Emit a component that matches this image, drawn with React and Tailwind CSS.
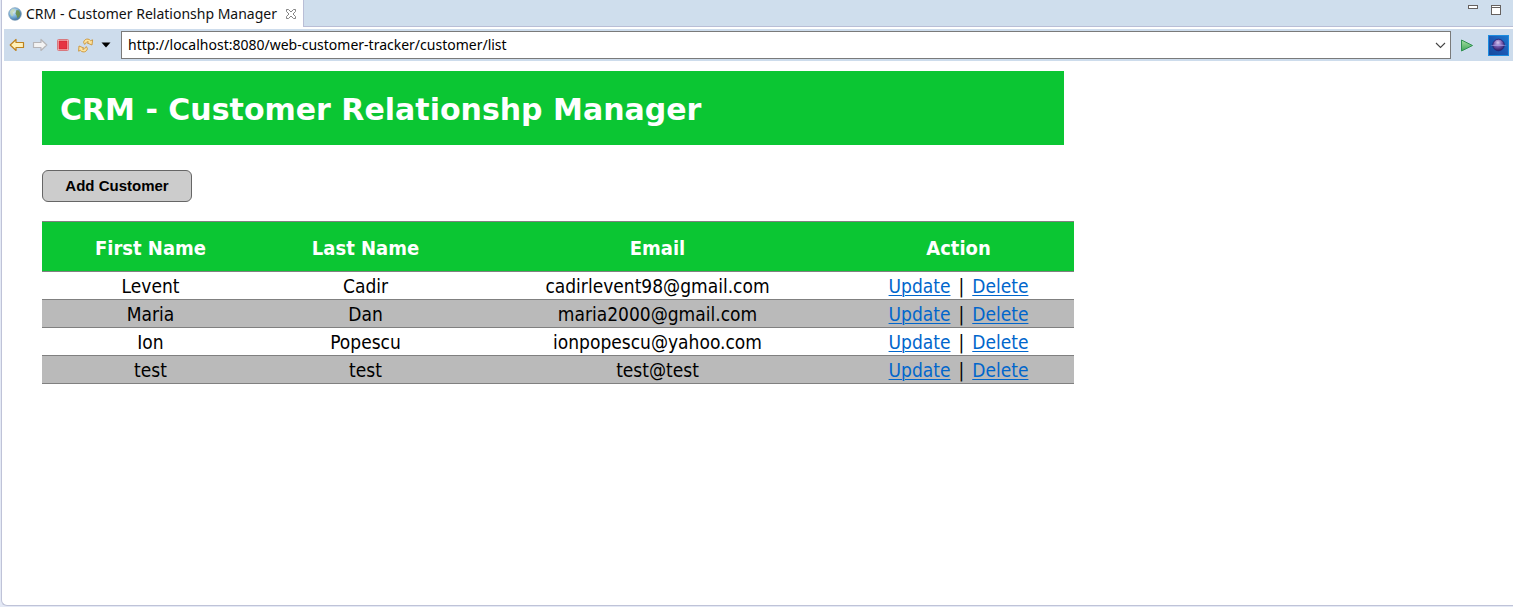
const customers = [
  { first: 'Levent', last: 'Cadir', email: 'cadirlevent98@gmail.com' },
  { first: 'Maria', last: 'Dan', email: 'maria2000@gmail.com' },
  { first: 'Ion', last: 'Popescu', email: 'ionpopescu@yahoo.com' },
  { first: 'test', last: 'test', email: 'test@test' },
];

function GlobeIcon() {
  return (
    <svg width="14" height="14" viewBox="0 0 14 14" aria-hidden="true">
      <defs>
        <radialGradient id="sea" cx="0.35" cy="0.3" r="0.8">
          <stop offset="0" stopColor="#e2f2fa" />
          <stop offset="0.5" stopColor="#7fb4dc" />
          <stop offset="1" stopColor="#2f6298" />
        </radialGradient>
      </defs>
      <circle cx="7" cy="7" r="6.3" fill="url(#sea)" stroke="#6f93b0" strokeWidth="0.7" />
      <path d="M2 4.500L4.500 1.800L7 2.200L6.500 4.200L4.500 6L5.500 8L4 9.500L2.500 7.500Z" fill="#c3d5ac" opacity="0.7" />
      <path d="M8.500 3L11 3.500L12.300 6.500L11.500 9.500L9.500 11.500L8.800 9L7.500 6.500Z" fill="#6c8f48" opacity="0.9" />
    </svg>
  );
}

function TabCloseIcon() {
  return (
    <svg width="12" height="12" viewBox="0 0 12 12" fill="#fff" stroke="#777" strokeWidth="0.9" aria-hidden="true">
      <path d="M1.500 1.500H3.500L6 4L8.500 1.500H10.500V3.500L8 6L10.500 8.500V10.500H8.500L6 8L3.500 10.500H1.500V8.500L4 6L1.500 3.500Z" />
    </svg>
  );
}

function BackIcon() {
  return (
    <svg width="16" height="14" viewBox="0 0 16 14" aria-hidden="true">
      <path d="M1.200 7L7 1.500V4.500H14.500V9.500H7V12.500Z" fill="#fff0b8" stroke="#bd821f" strokeWidth="1.200" strokeLinejoin="round" />
    </svg>
  );
}

function ForwardIcon() {
  return (
    <svg width="16" height="14" viewBox="0 0 16 14" aria-hidden="true">
      <path d="M14.800 7L9 1.500V4.500H1.500V9.500H9V12.500Z" fill="#f3f3f3" stroke="#b5b5b8" strokeWidth="1.200" strokeLinejoin="round" />
    </svg>
  );
}

function StopIcon() {
  return (
    <svg width="12" height="12" viewBox="0 0 12 12" aria-hidden="true">
      <rect x="0.500" y="0.500" width="11" height="11" rx="1" fill="#f9c0c0" stroke="#d8787e" />
      <rect x="2" y="2" width="8" height="8" fill="#e63442" stroke="#c8202e" strokeWidth="0.600" />
    </svg>
  );
}

function RefreshIcon() {
  return (
    <svg width="16" height="16" viewBox="0 0 16 16" fill="#ffe4a0" stroke="#c99336" strokeWidth="0.9" strokeLinejoin="round" aria-hidden="true">
      <path d="M6.500 7.300L5.600 5.200C6 3.200 7.800 1.800 10 2.100C11.200 2.300 12 2.900 12.600 3.700L14.600 2.800L14 8L9.200 6L10.500 5C9.300 4.200 8 5 7.800 6.500Z" />
      <path d="M8.500 9.700L9.400 11.800C9 13.800 7.200 15.200 5 14.900C3.800 14.700 3 14.100 2.400 13.300L0.600 14.200L1 9L5.800 11L4.500 12C5.700 12.800 7 12 7.200 10.500Z" />
    </svg>
  );
}

function GoIcon() {
  return (
    <svg width="14" height="13" viewBox="0 0 14 13" aria-hidden="true">
      <defs>
        <linearGradient id="go" x1="0" y1="0" x2="0" y2="1">
          <stop offset="0" stopColor="#a5dfa0" />
          <stop offset="1" stopColor="#3fa65a" />
        </linearGradient>
      </defs>
      <path d="M1.500 1L12.500 6.500L1.500 12Z" fill="url(#go)" stroke="#2f9150" strokeWidth="1" strokeLinejoin="round" />
    </svg>
  );
}

function PlanetIcon() {
  return (
    <svg width="21" height="21" viewBox="0 0 21 21" aria-hidden="true">
      <defs>
        <linearGradient id="sky" x1="1" y1="0" x2="0" y2="1">
          <stop offset="0" stopColor="#1a7ad0" />
          <stop offset="0.500" stopColor="#1c58b4" />
          <stop offset="1" stopColor="#164a9c" />
        </linearGradient>
        <radialGradient id="planet" cx="0.450" cy="0.300" r="0.700">
          <stop offset="0" stopColor="#d8c8f0" />
          <stop offset="0.500" stopColor="#7658ac" />
          <stop offset="1" stopColor="#2a1a62" />
        </radialGradient>
      </defs>
      <rect x="0.500" y="0.500" width="20" height="20" fill="url(#sky)" stroke="#1c8ce0" />
      <circle cx="10.500" cy="10" r="5.800" fill="url(#planet)" stroke="#2b1f70" strokeWidth="0.800" />
      <path d="M2 10.200Q10.500 8.800 19 10.200Q10.500 11.400 2 10.200Z" fill="#a9a0e6" />
    </svg>
  );
}

function TabBar() {
  return (
    <header className="flex h-[27px] items-stretch justify-between border-b border-[#b9bed6] bg-[#cfdeed]">
      <div className="-mb-px flex items-center gap-1 border-r border-[#b9bed6] bg-white px-1.5">
        <GlobeIcon />
        <span className="text-sm text-[#111]">CRM - Customer Relationshp Manager</span>
        <button type="button" aria-label="Close tab" className="ml-1">
          <TabCloseIcon />
        </button>
      </div>
      <div className="flex items-start gap-[11px] pt-1 pr-[11px]">
        <button type="button" aria-label="Minimize">
          <svg width="12" height="12" viewBox="0 0 12 12" aria-hidden="true">
            <rect x="1.500" y="1.500" width="9" height="3" fill="#fff" stroke="#66615f" />
          </svg>
        </button>
        <button type="button" aria-label="Maximize">
          <svg width="12" height="12" viewBox="0 0 12 12" aria-hidden="true">
            <rect x="1.500" y="1.500" width="9" height="9" fill="#fff" stroke="#66615f" />
            <path d="M1 3.500H11" stroke="#66615f" />
          </svg>
        </button>
      </div>
    </header>
  );
}

function Toolbar() {
  return (
    <div className="mt-0.5 ml-0.5 flex h-8 items-center bg-[#cddcec] pl-[5px]">
      <div className="flex items-center gap-[7px]">
        <button type="button" aria-label="Back"><BackIcon /></button>
        <button type="button" aria-label="Forward"><ForwardIcon /></button>
        <button type="button" aria-label="Stop" className="px-0.5"><StopIcon /></button>
        <button type="button" aria-label="Refresh"><RefreshIcon /></button>
        <button type="button" aria-label="Refresh options">
          <svg width="10" height="6" viewBox="0 0 10 6" aria-hidden="true"><path d="M0.500 0.500H9.500L5 5.500Z" fill="#000" /></svg>
        </button>
      </div>
      <form className="ml-2.5 flex h-7 flex-1 items-center border border-[#7a7a7a] bg-white">
        <input
          type="text"
          aria-label="Address"
          defaultValue="http://localhost:8080/web-customer-tracker/customer/list"
          className="h-full min-w-0 flex-1 bg-transparent pb-0.5 pl-1.5 text-sm text-black outline-none"
        />
        <button type="button" aria-label="Show address history" className="px-1">
          <svg width="11" height="7" viewBox="0 0 11 7" fill="none" stroke="#444" strokeWidth="1.100" aria-hidden="true"><path d="M1 1L5.500 5.500L10 1" /></svg>
        </button>
      </form>
      <button type="button" aria-label="Go" className="ml-[9px]"><GoIcon /></button>
      <button type="button" aria-label="Open in external browser" className="ml-3.5 mr-1"><PlanetIcon /></button>
    </div>
  );
}

function CustomerTable() {
  const link = 'text-[#0066cc] underline decoration-1 underline-offset-2';
  return (
    <table className="mt-[19px] w-full max-w-[1032px] table-fixed border-collapse text-center text-[19px] leading-[25px] text-black">
      <colgroup>
        <col className="w-[217px]" />
        <col className="w-[213px]" />
        <col className="w-[371px]" />
        <col className="w-[231px]" />
      </colgroup>
      <thead>
        <tr className="h-[50px] border-y border-[#808080] bg-[#0bc633] text-xl text-white">
          <th className="pt-0.5 font-bold">First Name</th>
          <th className="pt-0.5 font-bold">Last Name</th>
          <th className="pt-0.5 font-bold">Email</th>
          <th className="pt-0.5 font-bold">Action</th>
        </tr>
      </thead>
      <tbody>
        {customers.map((c) => (
          <tr key={c.email} className="border-b border-[#808080] even:bg-[#bababa]">
            <td className="pt-0.5">{c.first}</td>
            <td className="pt-0.5">{c.last}</td>
            <td className="pt-0.5">{c.email}</td>
            <td className="pt-0.5">
              <a href="#update" className={link}>Update</a>
              <span className="px-2">|</span>
              <a href="#delete" className={link}>Delete</a>
            </td>
          </tr>
        ))}
      </tbody>
    </table>
  );
}

export default function App() {
  return (
    <div className="flex min-h-screen flex-col bg-[#e4e9f5] pb-px pl-px font-['Noto_Sans',sans-serif]">
      <div className="flex flex-1 flex-col rounded-bl-md border-b border-l border-[#bfc3d8] bg-white">
        <TabBar />
        <Toolbar />
        <main className="px-10 pt-2.5 font-['DejaVu_Sans_Condensed','DejaVu_Sans',sans-serif]">
          <div className="flex h-[74px] w-full max-w-[1022px] items-center bg-[#0bc633] px-[18px] pt-1">
            <h1 className="font-['DejaVu_Sans',sans-serif] text-3xl font-bold text-white">CRM - Customer Relationshp Manager</h1>
          </div>
          <button type="button" className="mt-[25px] block h-8 w-[150px] rounded-md border border-[#666] bg-[#ccc] font-['Liberation_Sans',sans-serif] text-[15px] font-bold text-black">
            Add Customer
          </button>
          <CustomerTable />
        </main>
      </div>
    </div>
  );
}
